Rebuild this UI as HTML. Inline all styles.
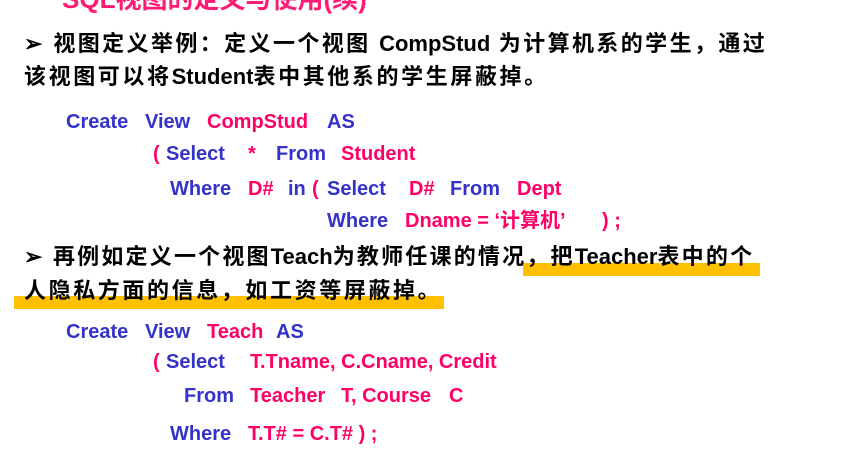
<!DOCTYPE html>
<html><head><meta charset="utf-8"><style>
body{margin:0;width:842px;height:468px;background:#fff;position:relative;overflow:hidden;font-family:"Liberation Sans","Noto Sans CJK SC",sans-serif;font-weight:bold}
.a{position:absolute;white-space:nowrap;line-height:1}
.c{font-size:20px}
.b{color:#3333cc}.p{color:#ff0066}
.t{font-size:22px;color:#000}
.t i{font-style:normal;letter-spacing:0}
.hl{position:absolute;background:#ffc000}
</style></head><body>
<div class="a p" style="left:62px;top:-14px;font-size:26px;color:#ff1a75">SQL视图的定义与使用(续)</div>

<div class="hl" style="left:523px;top:263px;width:237px;height:13px"></div>
<div class="hl" style="left:14px;top:296px;width:430px;height:13px"></div>

<div class="a t" style="left:24px;top:33px;letter-spacing:2.4px">➢ 视图定义举例：定义一个视图 <i>CompStud</i> 为计算机系的学生，通过</div>
<div class="a t" style="left:24px;top:66px;letter-spacing:2.6px">该视图可以将<i>Student</i>表中其他系的学生屏蔽掉。</div>

<div class="a c b" style="left:66px;top:112px">Create</div>
<div class="a c b" style="left:145px;top:112px">View</div>
<div class="a c p" style="left:207px;top:112px">CompStud</div>
<div class="a c b" style="left:327px;top:112px">AS</div>

<div class="a c p" style="left:153px;top:144px">(</div>
<div class="a c b" style="left:166px;top:144px">Select</div>
<div class="a c p" style="left:248px;top:144px">*</div>
<div class="a c b" style="left:276px;top:144px">From</div>
<div class="a c p" style="left:341px;top:144px">Student</div>

<div class="a c b" style="left:170px;top:179px">Where</div>
<div class="a c p" style="left:248px;top:179px">D#</div>
<div class="a c b" style="left:288px;top:179px">in</div>
<div class="a c p" style="left:312px;top:179px">(</div>
<div class="a c b" style="left:327px;top:179px">Select</div>
<div class="a c p" style="left:409px;top:179px">D#</div>
<div class="a c b" style="left:450px;top:179px">From</div>
<div class="a c p" style="left:517px;top:179px">Dept</div>

<div class="a c b" style="left:327px;top:211px">Where</div>
<div class="a c p" style="left:405px;top:211px">Dname = ‘计算机’</div>
<div class="a c p" style="left:602px;top:211px">) ;</div>

<div class="a t" style="left:24px;top:246px;letter-spacing:2.2px">➢ 再例如定义一个视图<i>Teach</i>为教师任课的情况，把<i>Teacher</i>表中的个</div>
<div class="a t" style="left:24px;top:280px;letter-spacing:2.6px">人隐私方面的信息，如工资等屏蔽掉。</div>

<div class="a c b" style="left:66px;top:322px">Create</div>
<div class="a c b" style="left:145px;top:322px">View</div>
<div class="a c p" style="left:207px;top:322px">Teach</div>
<div class="a c b" style="left:276px;top:322px">AS</div>

<div class="a c p" style="left:153px;top:352px">(</div>
<div class="a c b" style="left:166px;top:352px">Select</div>
<div class="a c p" style="left:250px;top:352px">T.Tname, C.Cname, Credit</div>

<div class="a c b" style="left:184px;top:386px">From</div>
<div class="a c p" style="left:250px;top:386px">Teacher</div>
<div class="a c p" style="left:341px;top:386px">T, Course</div>
<div class="a c p" style="left:449px;top:386px">C</div>

<div class="a c b" style="left:170px;top:424px">Where</div>
<div class="a c p" style="left:248px;top:424px">T.T# = C.T# ) ;</div>
</body></html>
